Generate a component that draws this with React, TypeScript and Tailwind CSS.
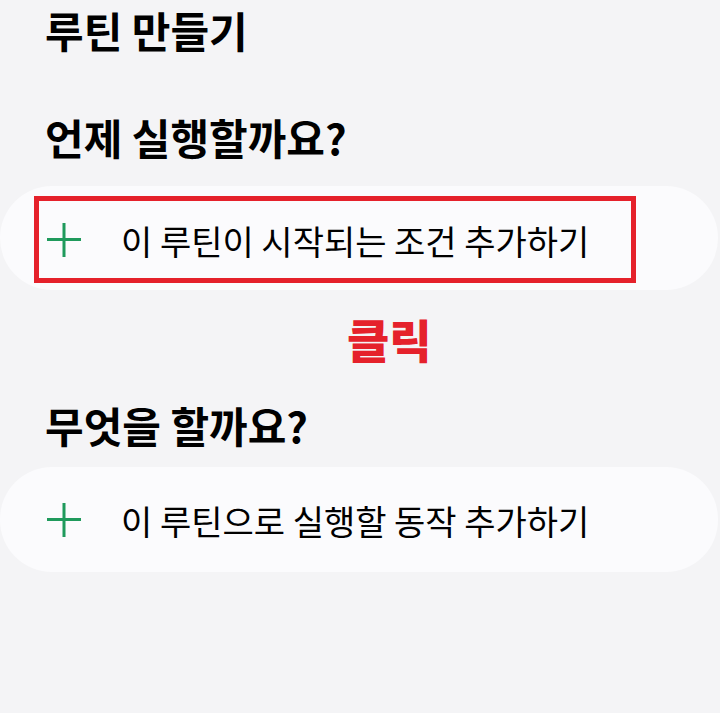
import React from "react";

const font = { fontFamily: '"Noto Sans CJK KR", "Noto Sans", sans-serif' };

function Plus() {
  return (
    <svg width="36" height="36" viewBox="0 0 36 36" className="shrink-0">
      <path d="M1 17.5H35M18 1V35" stroke="#1f9a5c" strokeWidth="3" fill="none" />
    </svg>
  );
}

export default function App() {
  return (
    <div
      className="w-[720px] h-[713px] bg-[#f4f4f6] overflow-hidden flex flex-col text-black"
      style={font}
    >
      <h1 className="pl-[45px] pt-[5px] text-[42px] leading-[50px] font-bold">
        루틴 만들기
      </h1>
      <h2 className="pl-[45px] mt-[57px] text-[42px] leading-[50px] font-bold">
        언제 실행할까요?
      </h2>
      <div className="mt-[24px] w-[718px] h-[104px] rounded-[52px] bg-[#fbfbfd] pl-[34px] pt-[10px]">
        <div className="w-[602px] h-[87px] border-[5px] border-[#e5212b] flex items-center pl-[7px]">
          <Plus />
          <span className="ml-[39px] text-[34px] leading-none font-normal mt-[2px]">
            이 루틴이 시작되는 조건 추가하기
          </span>
        </div>
      </div>
      <div className="mt-[21px] pl-[347px] text-[46px] leading-[54px] font-black text-[#e5212b]">
        클릭
      </div>
      <h2 className="pl-[45px] mt-[35px] text-[42px] leading-[50px] font-bold">
        무엇을 할까요?
      </h2>
      <div className="mt-[17px] w-[718px] h-[105px] rounded-[52px] bg-[#fbfbfd] flex items-center pl-[46px]">
        <Plus />
        <span className="ml-[39px] text-[34px] leading-none font-normal mt-[2px]">
          이 루틴으로 실행할 동작 추가하기
        </span>
      </div>
    </div>
  );
}
